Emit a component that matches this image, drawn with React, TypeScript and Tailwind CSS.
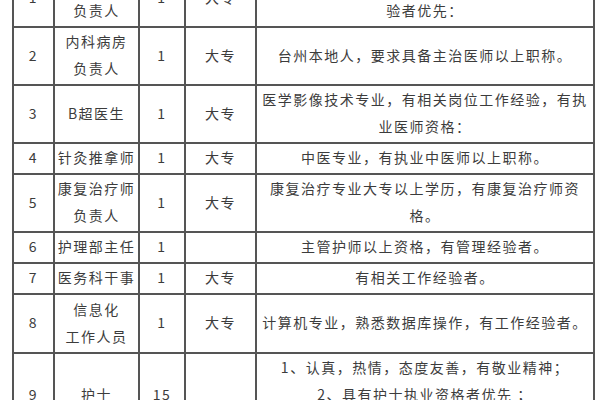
import React from "react";

type Row = {
  no: string;
  post: React.ReactNode;
  num: string;
  edu: string;
  req: React.ReactNode;
  h: string;
};

const rows: Row[] = [
  {
    no: "1",
    post: (<>外科病房<br />负责人</>),
    num: "1",
    edu: "大专",
    req: (<>具有主治医师以上职称，有相关工作经<br />验者优先：</>),
    h: "h-[58px]",
  },
  {
    no: "2",
    post: (<>内科病房<br />负责人</>),
    num: "1",
    edu: "大专",
    req: <>台州本地人，要求具备主治医师以上职称。</>,
    h: "h-[58px]",
  },
  {
    no: "3",
    post: <>B超医生</>,
    num: "1",
    edu: "大专",
    req: (<>医学影像技术专业，有相关岗位工作经验，有执<br />业医师资格：</>),
    h: "h-[58px]",
  },
  {
    no: "4",
    post: <>针灸推拿师</>,
    num: "1",
    edu: "大专",
    req: <>中医专业，有执业中医师以上职称。</>,
    h: "h-[29px]",
  },
  {
    no: "5",
    post: (<>康复治疗师<br />负责人</>),
    num: "1",
    edu: "大专",
    req: (<>康复治疗专业大专以上学历，有康复治疗师资<br />格。</>),
    h: "h-[57px]",
  },
  {
    no: "6",
    post: <>护理部主任</>,
    num: "1",
    edu: "",
    req: <>主管护师以上资格，有管理经验者。</>,
    h: "h-[30px]",
  },
  {
    no: "7",
    post: <>医务科干事</>,
    num: "1",
    edu: "大专",
    req: <>有相关工作经验者。</>,
    h: "h-[29px]",
  },
  {
    no: "8",
    post: (<>信息化<br />工作人员</>),
    num: "1",
    edu: "大专",
    req: <>计算机专业，熟悉数据库操作，有工作经验者。</>,
    h: "h-[59px]",
  },
  {
    no: "9",
    post: <>护士</>,
    num: "15",
    edu: "",
    req: (<>1、认真，热情，态度友善，有敬业精神；<br />2、具有护士执业资格者优先 ；<br />3、有相关工作经验者优先。</>),
    h: "h-[83px]",
  },
];

const cell =
  "border-2 border-[#555555] text-center align-middle whitespace-nowrap px-0 pt-0 pb-[2px]";

export default function App() {
  return (
    <div
      className="w-[600px] h-[400px] overflow-hidden bg-white text-[#3c3c3c]"
      style={{ fontFamily: '"Noto Sans CJK SC", "Noto Sans", sans-serif' }}
    >
      <table className="mt-[-32px] ml-[12px] w-[583px] table-fixed border-collapse text-[14px] leading-[27px] tracking-[1.5px]">
        <colgroup>
          <col className="w-[41px]" />
          <col className="w-[85px]" />
          <col className="w-[46px]" />
          <col className="w-[71px]" />
          <col className="w-[338px]" />
        </colgroup>
        <tbody>
          {rows.map((r) => (
            <tr key={r.no} className={r.h}>
              <td className={cell}>{r.no}</td>
              <td className={cell}>{r.post}</td>
              <td className={cell}>{r.num}</td>
              <td className={cell}>{r.edu}</td>
              <td className={cell}>{r.req}</td>
            </tr>
          ))}
        </tbody>
      </table>
    </div>
  );
}
